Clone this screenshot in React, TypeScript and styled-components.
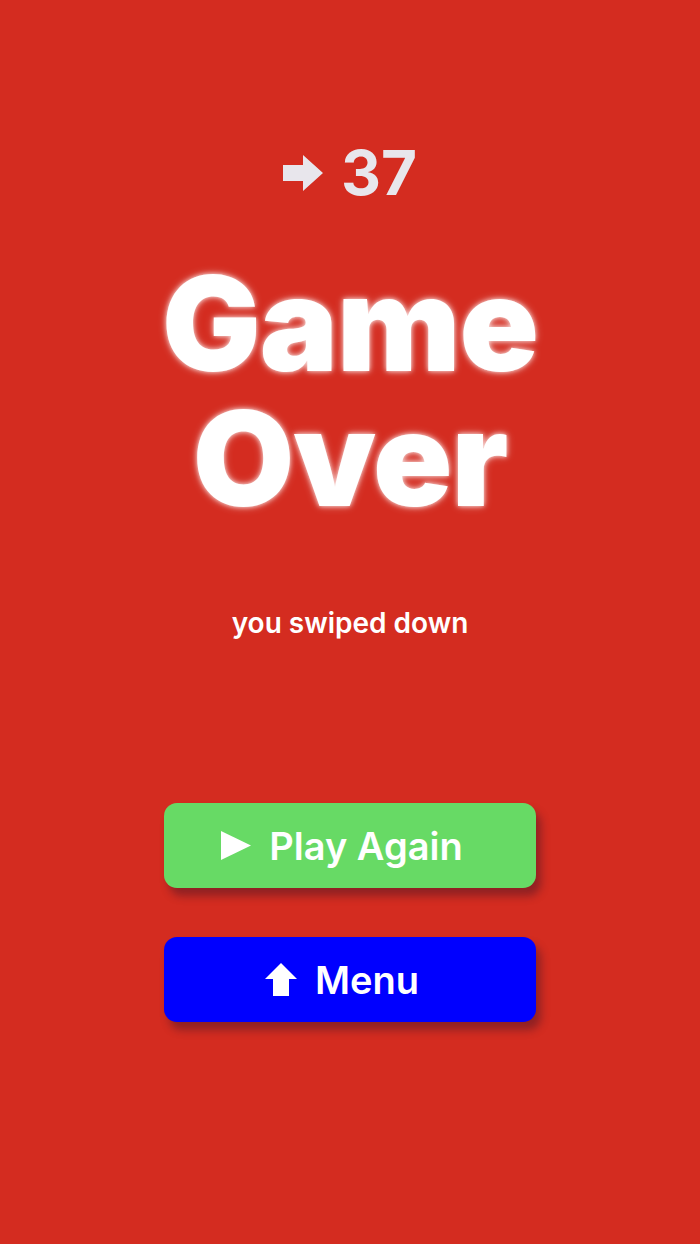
import React from 'react';
import styled, { createGlobalStyle } from 'styled-components';

const GlobalStyle = createGlobalStyle`
  html, body {
    margin: 0;
    padding: 0;
    background: #d42c20;
  }
  body {
    font-family: Inter, "Noto Sans", sans-serif;
  }
`;

const Screen = styled.div`
  width: 700px;
  height: 1244px;
  background: #d42c20;
  display: flex;
  flex-direction: column;
  align-items: center;
  box-sizing: border-box;
  padding-top: 138px;
`;

const Score = styled.div`
  display: flex;
  align-items: center;
  gap: 18px;
  color: #e8e6ec;
  font-size: 62px;
  font-weight: 700;
  line-height: 70px;
`;

const Title = styled.h1`
  margin: 48px 0 0;
  color: #ffffff;
  font-size: 131px;
  font-weight: 900;
  line-height: 135px;
  letter-spacing: -1px;
  text-align: center;
  text-shadow: 0 0 5px rgba(255, 255, 255, 0.85), 0 0 10px rgba(255, 255, 255, 0.4);
`;

const Reason = styled.p`
  margin: 80px 0 0;
  color: #ffffff;
  font-size: 28px;
  font-weight: 600;
  line-height: 34px;
`;

const Actions = styled.div`
  margin-top: 163px;
  display: flex;
  flex-direction: column;
  gap: 49px;
`;

const ActionButton = styled.button<{ $bg: string }>`
  width: 372px;
  height: 85px;
  padding: 0 16px 0 0;
  border: none;
  border-radius: 13px;
  background: ${(p) => p.$bg};
  color: #ffffff;
  font-family: Inter, "Noto Sans", sans-serif;
  font-size: 38px;
  font-weight: 600;
  display: flex;
  align-items: center;
  justify-content: center;
  gap: 18px;
  box-shadow: 5px 8px 8px rgba(60, 20, 40, 0.45);
  cursor: pointer;
`;

const RightArrow = () => (
  <svg width="40" height="36" viewBox="0 0 40 36">
    <path d="M0 10 H20 V0 L40 18 L20 36 V26 H0 Z" fill="#e8e6ec" />
  </svg>
);

const PlayIcon = () => (
  <svg width="30" height="29" viewBox="0 0 30 29">
    <path d="M0 0 L30 14.5 L0 29 Z" fill="#ffffff" />
  </svg>
);

const UpArrow = () => (
  <svg width="32" height="33" viewBox="0 0 32 33">
    <path d="M16 0 L32 16 H24 V33 H8 V16 H0 Z" fill="#ffffff" />
  </svg>
);

export default function App() {
  return (
    <>
      <GlobalStyle />
      <Screen>
        <Score>
          <RightArrow />
          <span>37</span>
        </Score>
        <Title>
          Game
          <br />
          Over
        </Title>
        <Reason>you swiped down</Reason>
        <Actions>
          <ActionButton $bg="#67da65">
            <PlayIcon />
            Play Again
          </ActionButton>
          <ActionButton $bg="#0000ff">
            <UpArrow />
            Menu
          </ActionButton>
        </Actions>
      </Screen>
    </>
  );
}
